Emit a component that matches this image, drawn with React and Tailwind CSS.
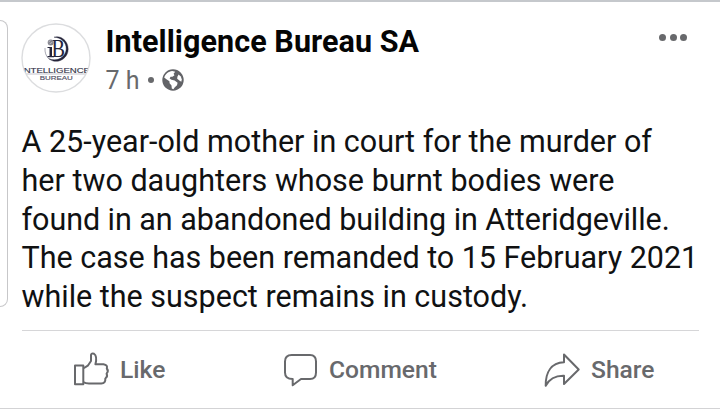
const BODY_LINES = [
  { text: 'A 25-year-old mother in court for the murder of', spacing: 'tracking-[0px]' },
  { text: 'her two daughters whose burnt bodies were', spacing: 'tracking-[0.02px]' },
  { text: 'found in an abandoned building in Atteridgeville.', spacing: 'tracking-[-0.05px]' },
  { text: 'The case has been remanded to 15 February 2021', spacing: 'tracking-[-0.01px]' },
  { text: 'while the suspect remains in custody.', spacing: 'tracking-[0px]' },
];

function Avatar() {
  return (
    <svg className="block h-[70px] w-[70px] shrink-0" viewBox="0 0 70 70">
      <defs>
        <clipPath id="avatar-clip">
          <circle cx="35" cy="35" r="33.6" />
        </clipPath>
      </defs>
      <circle cx="35" cy="35" r="34" fill="#fff" stroke="#dcdddf" strokeWidth="1.4" />
      <g clipPath="url(#avatar-clip)">
        <path d="M33 14.2C39 12 47.2 17 47.2 26.2C47 36.5 35 42 27.5 35.5C36 39.5 44.8 34 45.2 26C45.4 19 40 14.5 33 14.2Z" fill="#25253b" stroke="#25253b" strokeWidth="0.4" />
        <path d="M27.5 35.5Q23.6 31.5 24 25" fill="none" stroke="#92929f" strokeWidth="0.8" />
        <text x="30.5" y="34.2" fontSize="26" fill="#25253b" fontFamily="Liberation Serif, serif" textLength="13.5" lengthAdjust="spacingAndGlyphs">B</text>
        <path d="M26.5 24H31V33H33V34.2H26.5V33H28.5V25H26.5Z" fill="#25253b" />
        <circle cx="29.7" cy="19.5" r="3" fill="#85858f" />
        <path d="M27.5 19L29.5 17.5M28.5 21L31.5 19" stroke="#d0d0d5" strokeWidth="0.7" />
        <text x="0" y="49.6" fontSize="7.4" fontWeight="500" fill="#34344a" stroke="#34344a" strokeWidth="0.15" fontFamily="Liberation Sans, sans-serif" textLength="69" lengthAdjust="spacingAndGlyphs">INTELLIGENCE</text>
        <path d="M2 51H68" stroke="#aaaab4" strokeWidth="0.7" />
        <text x="18.8" y="56.8" fontSize="6" fontWeight="500" fill="#4f4f64" stroke="#4f4f64" strokeWidth="0.15" fontFamily="Liberation Sans, sans-serif" textLength="33" lengthAdjust="spacingAndGlyphs">BUREAU</text>
      </g>
    </svg>
  );
}

function Globe() {
  return (
    <svg className="block h-[22px] w-[22px]" viewBox="0 0 22 22">
      <circle cx="11" cy="11" r="10.7" fill="#626367" />
      <path d="M2.2 8.6C3.4 5 6.5 2.4 10.2 2L13.2 2.8L11.6 4.8L12.5 6.2L10.4 7.8L8.6 7.7L7.6 9.6L9.5 10.8L12.6 11.6L15.6 13.8L15 16.2L12.8 18.2L11.4 20.2L9.8 19.4L9.5 16.4L7.6 14.2L7.4 12.2L4.4 10.2Z" fill="#fff" />
      <path d="M16.6 5.4L18.8 7.4L19.8 10.6L19.3 12.8L17.4 11.6L15.2 9.8L15.4 7.8Z" fill="#fff" />
    </svg>
  );
}

function ActionIcon({ d }) {
  return (
    <svg className="block h-[36px] w-[38px] shrink-0" viewBox="0 0 38 36" fill="none" stroke="#68696c" strokeWidth="2" strokeLinejoin="round" strokeLinecap="round">
      <path d={d} />
    </svg>
  );
}

export default function App() {
  return (
    <div className="flex h-[418px] w-[720px] flex-col overflow-hidden bg-white font-['Roboto',sans-serif]">
      <div className="h-[2px] shrink-0 bg-[#c5c8cc]" />
      <div className="flex h-[328px] shrink-0">
        <aside className="mt-[18px] h-[287px] w-[8px] shrink-0 rounded-r-[9px] border border-l-0 border-[#c7c7c9]" />
        <article className="ml-[13px] w-[678px]">
          <header className="flex h-[112px] pt-[21px]">
            <Avatar />
            <div className="ml-[14.5px] flex-1">
              <h1 className="h-[38px] whitespace-nowrap text-[30.5px] leading-[38px] font-bold tracking-[0.07px] text-[#050505]">Intelligence Bureau SA</h1>
              <div className="flex h-[38px] items-center text-[25px] leading-[38px] text-[#68696c]">
                <span className="w-[34px] pt-[2px] whitespace-nowrap">7 h</span>
                <span className="mr-[8px] ml-2 h-[6px] w-[6px] rounded-full bg-[#68696c]" />
                <Globe />
              </div>
            </div>
            <div className="mt-[10.5px] mr-[12px] flex gap-[3.5px]">
              <i className="h-[7px] w-[7px] rounded-full bg-[#68696c]" />
              <i className="h-[7px] w-[7px] rounded-full bg-[#68696c]" />
              <i className="h-[7px] w-[7px] rounded-full bg-[#68696c]" />
            </div>
          </header>
          <p className="ml-[0.5px] pt-[9px] text-[30.5px] leading-[38.75px] text-[#101112]">
            {BODY_LINES.map((line) => (
              <span key={line.text} className={`block whitespace-nowrap ${line.spacing}`}>{line.text}</span>
            ))}
          </p>
        </article>
      </div>
      <div className="mr-[21.5px] ml-[21.5px] h-px shrink-0 bg-[#d6d6d8]" />
      <footer className="flex h-[78px] shrink-0 border-b border-[#d3d3d5] text-[24.6px] leading-[36px] font-medium text-[#68696c]">
        <div className="flex w-[210px] pt-[21px] pl-[73px]">
          <ActionIcon d="M2 13.5H10.3V32.3H2ZM10.3 16.5L14.8 13.7L18 9V3Q18.4 0.9 21 1.8Q24.5 4.2 22.4 12.3H30.5Q35 13 33.8 16.5Q36 19 33.6 21.7Q35 24.8 32.3 26.5Q32.8 31.2 28.3 31.5H16Q12.5 31.5 10.3 30" />
          <span className="ml-[9px]">Like</span>
        </div>
        <div className="flex w-[260px] pt-[21px] pl-[73px]">
          <ActionIcon d="M8.7 3H27Q33 3 33 9.5V20.5Q33 27 27 27H18L9.7 33.3V27Q2 27 2 20.5V9.5Q2 3 8.7 3Z" />
          <span className="ml-[8px]">Comment</span>
        </div>
        <div className="flex flex-1 pt-[21px] pl-[73px]">
          <ActionIcon d="M21 2.5L35.7 17.5L21 32V23.8C11 23.5 6 27.5 2.7 33.8C2.5 20.5 8 10.8 21 10.3Z" />
          <span className="ml-[10px]">Share</span>
        </div>
      </footer>
    </div>
  );
}
